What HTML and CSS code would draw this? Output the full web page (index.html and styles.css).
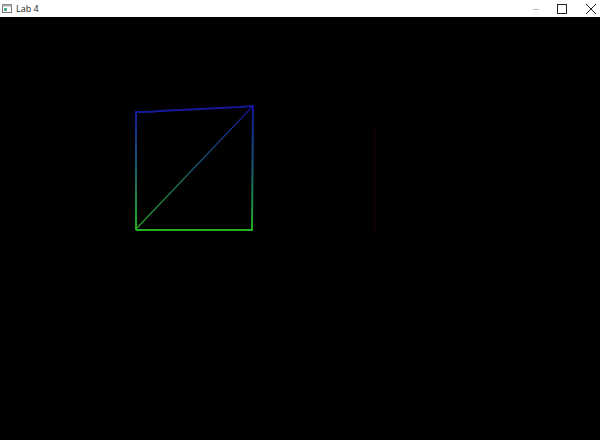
FILE: index.html
```html
<!DOCTYPE html>
<html>
<head>
<meta charset="utf-8">
<link rel="stylesheet" href="styles.css">
</head>
<body>
<div class="window">
  <div class="titlebar">
    <div class="title">
      <svg class="app-icon" width="10" height="9" viewBox="0 0 10 9">
        <rect x="0.5" y="0.5" width="9" height="8" fill="#fff" stroke="#777"/>
        <rect x="0.5" y="0.5" width="9" height="2" fill="#aaa"/>
        <rect x="2" y="4" width="3" height="3" fill="#5a8"/>
      </svg>
      <span class="title-text">Lab 4</span>
    </div>
    <div class="controls">
      <span class="ctl ctl-min"><svg width="10" height="10" viewBox="0 0 10 10"><line x1="2" y1="5.5" x2="8" y2="5.5" stroke="#bbb" stroke-width="1"/></svg></span>
      <span class="ctl ctl-max"><svg width="10" height="10" viewBox="0 0 10 10"><rect x="0.5" y="0.5" width="9" height="9" fill="none" stroke="#222" stroke-width="1"/></svg></span>
      <span class="ctl ctl-close"><svg width="10" height="10" viewBox="0 0 10 10"><path d="M0 0 L10 10 M10 0 L0 10" stroke="#222" stroke-width="1"/></svg></span>
    </div>
  </div>
  <div class="canvas">
    <svg width="600" height="423" viewBox="0 17 600 423">
      <defs>
        <linearGradient id="g" x1="0" y1="106" x2="0" y2="229" gradientUnits="userSpaceOnUse">
          <stop offset="0" stop-color="#14149a"/>
          <stop offset="0.5" stop-color="#1a5a70"/>
          <stop offset="1" stop-color="#22b022"/>
        </linearGradient>
      </defs>
      <g fill="none" stroke="url(#g)" stroke-width="2">
        <polyline points="136,230 136,112 148,112 160,111 180,110 200,109 220,108 240,107 253,106 252,230 136,230"/>
      </g>
      <line x1="136" y1="229" x2="252" y2="107" stroke="url(#g)" stroke-width="1.2"/>
      <line x1="374.5" y1="128" x2="374.5" y2="235" stroke="#1c0404" stroke-width="1"/>
    </svg>
  </div>
</div>
</body>
</html>
```

FILE: styles.css
```css
html, body {
  margin: 0;
  padding: 0;
  background: #000;
}
.window {
  width: 600px;
  height: 440px;
  display: flex;
  flex-direction: column;
  overflow: hidden;
}
.titlebar {
  height: 17px;
  background: #fff;
  display: flex;
  align-items: center;
  justify-content: space-between;
  flex: none;
}
.title {
  display: flex;
  align-items: center;
  gap: 4px;
  padding-left: 2px;
}
.app-icon {
  display: block;
}
.title-text {
  font-family: "Open Sans", "Liberation Sans", sans-serif;
  font-size: 9px;
  color: #222;
  line-height: 1;
}
.controls {
  display: flex;
  align-items: center;
  height: 100%;
  padding-right: 4px;
}
.ctl {
  width: 10px;
  display: flex;
  align-items: center;
  justify-content: center;
}
.ctl-max {
  margin-left: 16px;
}
.ctl-close {
  margin-left: 19px;
}
.ctl svg {
  display: block;
}
.canvas {
  flex: 1;
  background: #000;
}
.canvas svg {
  display: block;
}
```
